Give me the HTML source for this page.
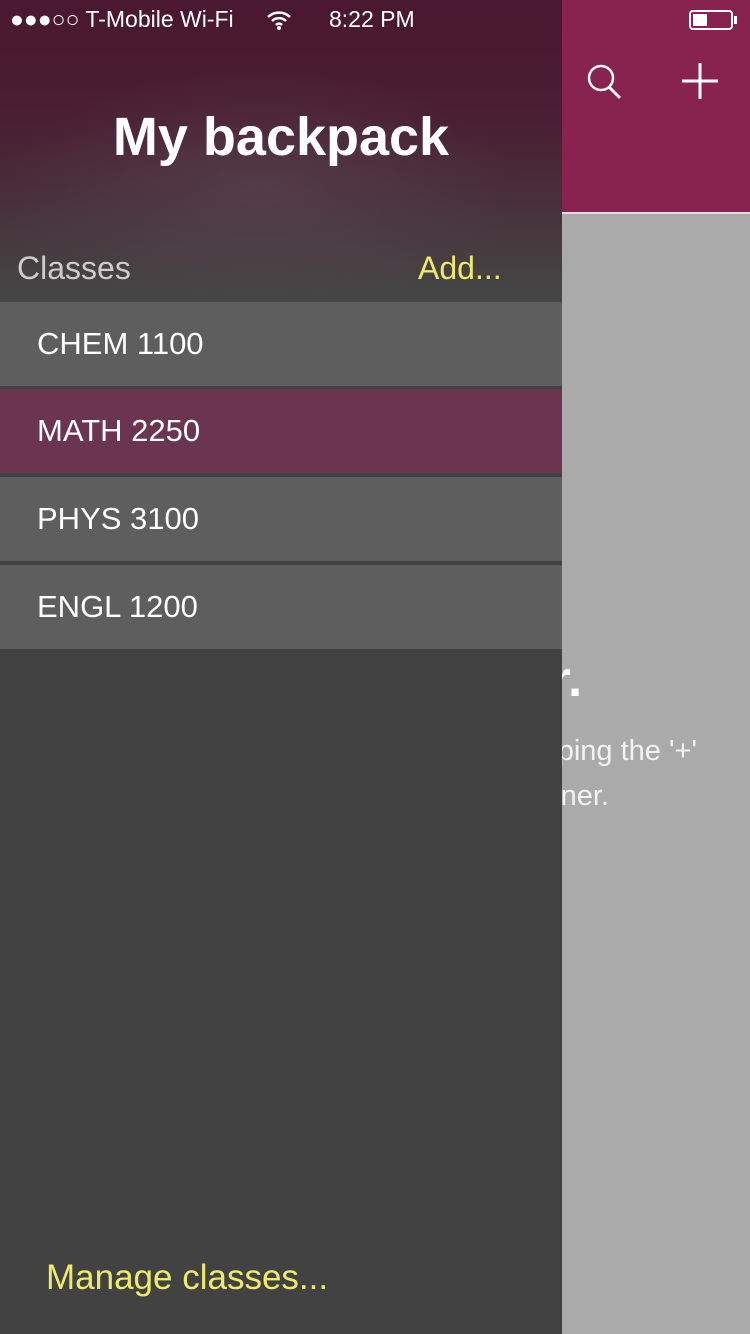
<!DOCTYPE html>
<html><head><meta charset="utf-8"><style>
*{margin:0;padding:0;box-sizing:border-box}
body{width:750px;height:1334px;overflow:hidden;position:relative;background:#aaaaaa;font-family:"Liberation Sans",sans-serif}
.top{position:absolute;left:0;top:0;width:750px;height:214px;background:#88234f;border-bottom:2px solid #ddd}
.drawer{position:absolute;left:0;top:0;width:562px;height:1334px;background:#424242}
.hdr{position:absolute;left:0;top:0;width:562px;height:302px;background:radial-gradient(ellipse 260px 120px at 260px 190px,rgba(90,70,80,.6),rgba(0,0,0,0)),linear-gradient(#4a1830 0px,#4a1e33 120px,#48303a 200px,#454545 290px)}
.row{position:absolute;left:0;width:562px;height:84px;background:#5e5e5e;color:#fff;font-size:31px;padding-left:37px;line-height:84px}
.sel{background:#6b3450}
.t{position:absolute;color:#fff;white-space:nowrap}
</style></head><body>
<div class="top"></div>
<div class="t" style="right:168px;top:650px;font-size:50px;font-weight:bold">ter.</div>
<div class="t" style="right:53px;top:735px;font-size:29px;color:#f2f2f2">pping the '+'</div>
<div class="t" style="right:141px;top:780px;font-size:29px;color:#f2f2f2">corner.</div>
<svg style="position:absolute;left:585px;top:62px" width="40" height="40" viewBox="0 0 40 40"><circle cx="16" cy="16" r="12" fill="none" stroke="#fff" stroke-width="2.5"/><line x1="24" y1="25" x2="35" y2="36" stroke="#fff" stroke-width="3"/></svg>
<svg style="position:absolute;left:682px;top:63px" width="36" height="36"><line x1="18" y1="0" x2="18" y2="36" stroke="#fff" stroke-width="3"/><line x1="0" y1="18" x2="36" y2="18" stroke="#fff" stroke-width="3"/></svg>
<div style="position:absolute;left:689px;top:10px;width:44px;height:20px;border:2px solid #fff;border-radius:4px"><div style="position:absolute;left:2px;top:2px;width:14px;height:12px;background:#fff"></div></div>
<div style="position:absolute;left:734px;top:16px;width:3px;height:8px;background:#fff"></div>
<div class="drawer">
<div class="hdr"></div>
<div class="t" style="left:10px;top:6px;font-size:23px">●●●○○ T-Mobile Wi-Fi</div>
<svg style="position:absolute;left:266px;top:10px" width="26" height="20" viewBox="0 0 26 20"><path d="M2 7a16 16 0 0 1 22 0M6 11a10 10 0 0 1 14 0M10 15a4 4 0 0 1 6 0" fill="none" stroke="#fff" stroke-width="2.5"/><circle cx="13" cy="18" r="2" fill="#fff"/></svg>
<div class="t" style="left:329px;top:6px;font-size:23px">8:22 PM</div>
<div class="t" style="left:0;width:562px;text-align:center;top:106px;font-size:54px;font-weight:bold">My backpack</div>
<div class="t" style="left:17px;top:250px;font-size:32px;color:#ccc">Classes</div>
<div class="t" style="left:418px;top:250px;font-size:32px;color:#eeeb6a">Add...</div>
<div class="row" style="top:302px">CHEM 1100</div>
<div class="row sel" style="top:389px">MATH 2250</div>
<div class="row" style="top:477px">PHYS 3100</div>
<div class="row" style="top:565px">ENGL 1200</div>
<div class="t" style="left:46px;top:1258px;font-size:35px;color:#eeeb6a">Manage classes...</div>
</div>
</body></html>
